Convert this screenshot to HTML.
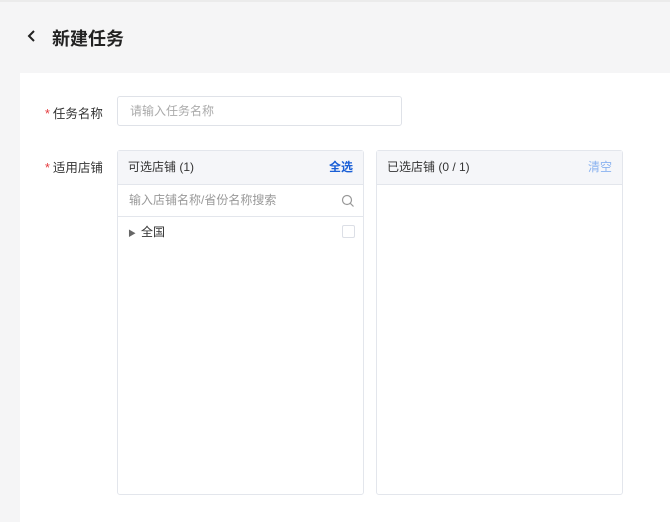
<!DOCTYPE html><html><head><meta charset="utf-8"><style>
body{margin:0;width:670px;height:522px;background:#f5f5f6;font-family:"Liberation Sans","Noto Sans CJK SC",sans-serif;position:relative;overflow:hidden}
.a{position:absolute}
.card{left:20px;top:73px;width:650px;height:449px;background:#fff}
.lbl{font-size:12.5px;color:#333}
.lbl b{color:#e4393c;font-weight:normal;margin-right:3px}
.panel{border:1px solid #e3e6ec;border-radius:3px;background:#fff;box-sizing:border-box}
.ph{height:33px;background:#f5f6f9;border-bottom:1px solid #e3e6ec;font-size:12px;color:#333;line-height:32px;padding:0 10px;position:relative}
.ph span{position:absolute;right:10px;top:0}
</style></head><body>
<div class="a" style="left:0;top:0;width:670px;height:2px;background:#ebebeb"></div>
<svg class="a" style="left:26px;top:29px" width="12" height="14" viewBox="0 0 12 14"><path d="M8 2L3 7L8 12" fill="none" stroke="#222" stroke-width="2"/></svg>
<div class="a" style="left:52px;top:25px;font-size:18px;color:#222;font-weight:bold">新建任务</div>
<div class="a card"></div>
<div class="a lbl" style="left:45px;top:103px"><b>*</b>任务名称</div>
<div class="a" style="left:117px;top:96px;width:285px;height:30px;border:1px solid #dfe2e8;border-radius:3px;box-sizing:border-box;font-size:12px;color:#aaa;line-height:28px;padding-left:12px">请输入任务名称</div>
<div class="a lbl" style="left:45px;top:157px"><b>*</b>适用店铺</div>
<div class="a panel" style="left:117px;top:150px;width:247px;height:345px">
<div class="ph">可选店铺 (1)<span style="color:#1a5fd6;font-weight:bold">全选</span></div>
<div style="height:31px;border-bottom:1px solid #e3e6ec;font-size:12px;color:#999;line-height:31px;padding-left:11px;position:relative">输入店铺名称/省份名称搜索
<svg style="position:absolute;right:8px;top:9px" width="14" height="14" viewBox="0 0 14 14"><circle cx="6" cy="6" r="4.5" fill="none" stroke="#999" stroke-width="1.2"/><path d="M9.3 9.3L12.5 12.5" stroke="#999" stroke-width="1.2"/></svg></div>
<div style="height:30px;font-size:12px;color:#333;line-height:30px;padding-left:10px;position:relative"><span style="font-size:8px;color:#666;margin-right:5px">▶</span>全国
<div style="position:absolute;right:8px;top:8px;width:13px;height:13px;border:1px solid #dcdfe6;border-radius:2px;box-sizing:border-box"></div></div>
</div>
<div class="a panel" style="left:376px;top:150px;width:247px;height:345px">
<div class="ph">已选店铺 (0 / 1)<span style="color:#8ab2f0">清空</span></div>
</div>
</body></html>
